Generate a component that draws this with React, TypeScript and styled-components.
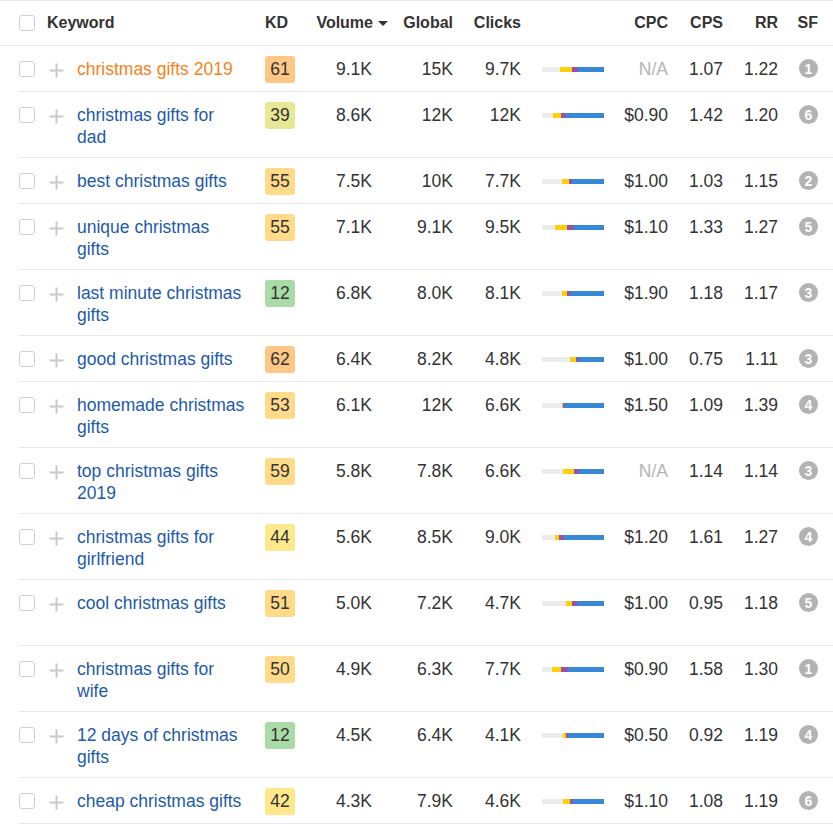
import React from "react";
import styled, { createGlobalStyle } from "styled-components";

const GlobalStyle = createGlobalStyle`
  html, body { margin: 0; padding: 0; background: #fff; }
  body { font-family: "Liberation Sans", Arial, sans-serif; color: #333; }
`;

const COLS = "30px 28px 188px 35px 88px 65px 68px 83px 64px 55px 55px 40px 1fr";

const Table = styled.div`
  width: 833px;
  display: flex;
  flex-direction: column;
`;

const HeaderRow = styled.div`
  display: grid;
  grid-template-columns: ${COLS};
  align-items: center;
  height: 46px;
  box-sizing: border-box;
  padding-left: 19px;
  border-top: 1px solid #e8e8e8;
  border-bottom: 1px solid #e8e8e8;
  font-size: 16px;
  font-weight: bold;
  color: #333;
`;

const HeadCell = styled.div<{ $align?: "left" | "right"; $shift?: number }>`
  display: flex;
  align-items: center;
  justify-content: ${(p) => (p.$align === "left" ? "flex-start" : "flex-end")};
  gap: 5px;
  white-space: nowrap;
  margin-left: ${(p) => p.$shift ?? 0}px;
`;

const SortArrow = styled.span`
  width: 0;
  height: 0;
  border-left: 5px solid transparent;
  border-right: 5px solid transparent;
  border-top: 5px solid #333;
  margin-top: 1px;
`;

const Row = styled.div<{ $tall?: boolean }>`
  display: grid;
  grid-template-columns: ${COLS};
  align-items: start;
  height: ${(p) => (p.$tall ? 66 : 46)}px;
  box-sizing: border-box;
  margin-left: 19px;
  padding-top: 12px;
  border-bottom: 1px solid #e8e8e8;
  font-size: 17.5px;
  line-height: 22px;
  color: #333;
`;

const Checkbox = styled.span`
  display: block;
  width: 16px;
  height: 16px;
  box-sizing: border-box;
  border: 1px solid #cfcfcf;
  border-radius: 3px;
  background: #fff;
  margin-top: 3px;
`;

const HeaderCheckbox = styled(Checkbox)`
  margin-top: 0;
`;

const PlusIcon = styled.svg`
  display: block;
  margin-top: 5px;
`;

const Keyword = styled.a<{ $active?: boolean }>`
  display: block;
  max-width: 168px;
  color: ${(p) => (p.$active ? "#f58220" : "#1d5aab")};
  text-decoration: none;
`;

const KdBadge = styled.span<{ $bg: string }>`
  display: inline-flex;
  align-items: center;
  justify-content: center;
  width: 30px;
  height: 27px;
  margin-top: -3px;
  border-radius: 3px;
  background: ${(p) => p.$bg};
  color: #333;
`;

const Num = styled.div<{ $pad?: number; $muted?: boolean }>`
  text-align: right;
  padding-right: ${(p) => p.$pad ?? 0}px;
  color: ${(p) => (p.$muted ? "#b5b5b5" : "#333")};
  white-space: nowrap;
`;

const BarCell = styled.div`
  display: flex;
  justify-content: flex-end;
  padding-top: 9px;
`;

const Bar = styled.div`
  display: flex;
  width: 62px;
  height: 5px;
`;

const Seg = styled.span<{ $c: string }>`
  display: block;
  height: 100%;
  background: ${(p) => p.$c};
`;

const SfCell = styled.div`
  display: flex;
  justify-content: flex-end;
  padding-top: 1px;
`;

const SfBadge = styled.span`
  display: inline-flex;
  align-items: center;
  justify-content: center;
  width: 19px;
  height: 19px;
  border-radius: 50%;
  background: #b3b3b3;
  color: #fff;
  font-size: 14px;
  font-weight: bold;
  line-height: 1;
`;

type Item = {
  kw: string;
  kd: number;
  vol: string;
  global: string;
  clicks: string;
  bar: [number, number, number, number];
  cpc: string;
  cps: string;
  rr: string;
  sf: number;
  tall?: boolean;
  active?: boolean;
};

const data: Item[] = [
  { kw: "christmas gifts 2019", kd: 61, vol: "9.1K", global: "15K", clicks: "9.7K", bar: [18, 12, 6, 26], cpc: "N/A", cps: "1.07", rr: "1.22", sf: 1, active: true },
  { kw: "christmas gifts for dad", kd: 39, vol: "8.6K", global: "12K", clicks: "12K", bar: [11, 8, 5, 38], cpc: "$0.90", cps: "1.42", rr: "1.20", sf: 6, tall: true },
  { kw: "best christmas gifts", kd: 55, vol: "7.5K", global: "10K", clicks: "7.7K", bar: [20, 7, 3, 32], cpc: "$1.00", cps: "1.03", rr: "1.15", sf: 2 },
  { kw: "unique christmas gifts", kd: 55, vol: "7.1K", global: "9.1K", clicks: "9.5K", bar: [13, 12, 7, 30], cpc: "$1.10", cps: "1.33", rr: "1.27", sf: 5, tall: true },
  { kw: "last minute christmas gifts", kd: 12, vol: "6.8K", global: "8.0K", clicks: "8.1K", bar: [20, 5, 3, 34], cpc: "$1.90", cps: "1.18", rr: "1.17", sf: 3, tall: true },
  { kw: "good christmas gifts", kd: 62, vol: "6.4K", global: "8.2K", clicks: "4.8K", bar: [28, 6, 2, 26], cpc: "$1.00", cps: "0.75", rr: "1.11", sf: 3 },
  { kw: "homemade christmas gifts", kd: 53, vol: "6.1K", global: "12K", clicks: "6.6K", bar: [20, 1, 1, 40], cpc: "$1.50", cps: "1.09", rr: "1.39", sf: 4, tall: true },
  { kw: "top christmas gifts 2019", kd: 59, vol: "5.8K", global: "7.8K", clicks: "6.6K", bar: [21, 11, 5, 25], cpc: "N/A", cps: "1.14", rr: "1.14", sf: 3, tall: true },
  { kw: "christmas gifts for girlfriend", kd: 44, vol: "5.6K", global: "8.5K", clicks: "9.0K", bar: [13, 4, 5, 40], cpc: "$1.20", cps: "1.61", rr: "1.27", sf: 4, tall: true },
  { kw: "cool christmas gifts", kd: 51, vol: "5.0K", global: "7.2K", clicks: "4.7K", bar: [24, 6, 5, 27], cpc: "$1.00", cps: "0.95", rr: "1.18", sf: 5, tall: true },
  { kw: "christmas gifts for wife", kd: 50, vol: "4.9K", global: "6.3K", clicks: "7.7K", bar: [10, 9, 7, 36], cpc: "$0.90", cps: "1.58", rr: "1.30", sf: 1, tall: true },
  { kw: "12 days of christmas gifts", kd: 12, vol: "4.5K", global: "6.4K", clicks: "4.1K", bar: [21, 3, 2, 36], cpc: "$0.50", cps: "0.92", rr: "1.19", sf: 4, tall: true },
  { kw: "cheap christmas gifts", kd: 42, vol: "4.3K", global: "7.9K", clicks: "4.6K", bar: [21, 7, 3, 31], cpc: "$1.10", cps: "1.08", rr: "1.19", sf: 6 },
];

function kdColor(kd: number): string {
  if (kd < 30) return "#a9dba6";
  if (kd < 40) return "#e6e896";
  if (kd < 50) return "#fde98b";
  if (kd < 60) return "#ffdb89";
  return "#ffc786";
}

const SEG_COLORS = ["#ebebeb", "#fdd007", "#9b51a8", "#3789d8"];

const Plus = () => (
  <PlusIcon width="15" height="15" viewBox="0 0 15 15">
    <path d="M7.5 0.5v14M0.5 7.5h14" stroke="#c9c9c9" strokeWidth="2" fill="none" />
  </PlusIcon>
);

export default function App() {
  return (
    <>
      <GlobalStyle />
      <Table>
        <HeaderRow>
          <HeadCell $align="left">
            <HeaderCheckbox />
          </HeadCell>
          <HeadCell $align="left" $shift={-2} style={{ gridColumn: "2 / span 2" }}>
            Keyword
          </HeadCell>
          <HeadCell $align="left">KD</HeadCell>
          <HeadCell>
            Volume
            <SortArrow />
          </HeadCell>
          <HeadCell>Global</HeadCell>
          <HeadCell>Clicks</HeadCell>
          <HeadCell />
          <HeadCell>CPC</HeadCell>
          <HeadCell>CPS</HeadCell>
          <HeadCell>RR</HeadCell>
          <HeadCell>SF</HeadCell>
        </HeaderRow>
        {data.map((d) => (
          <Row key={d.kw} $tall={d.tall}>
            <Checkbox />
            <Plus />
            <Keyword $active={d.active}>{d.kw}</Keyword>
            <div>
              <KdBadge $bg={kdColor(d.kd)}>{d.kd}</KdBadge>
            </div>
            <Num $pad={16}>{d.vol}</Num>
            <Num>{d.global}</Num>
            <Num>{d.clicks}</Num>
            <BarCell>
              <Bar>
                {d.bar.map((w, i) => (
                  <Seg key={i} $c={SEG_COLORS[i]} style={{ width: `${w}px` }} />
                ))}
              </Bar>
            </BarCell>
            <Num $muted={d.cpc === "N/A"}>{d.cpc}</Num>
            <Num>{d.cps}</Num>
            <Num>{d.rr}</Num>
            <SfCell>
              <SfBadge>{d.sf}</SfBadge>
            </SfCell>
          </Row>
        ))}
      </Table>
    </>
  );
}
